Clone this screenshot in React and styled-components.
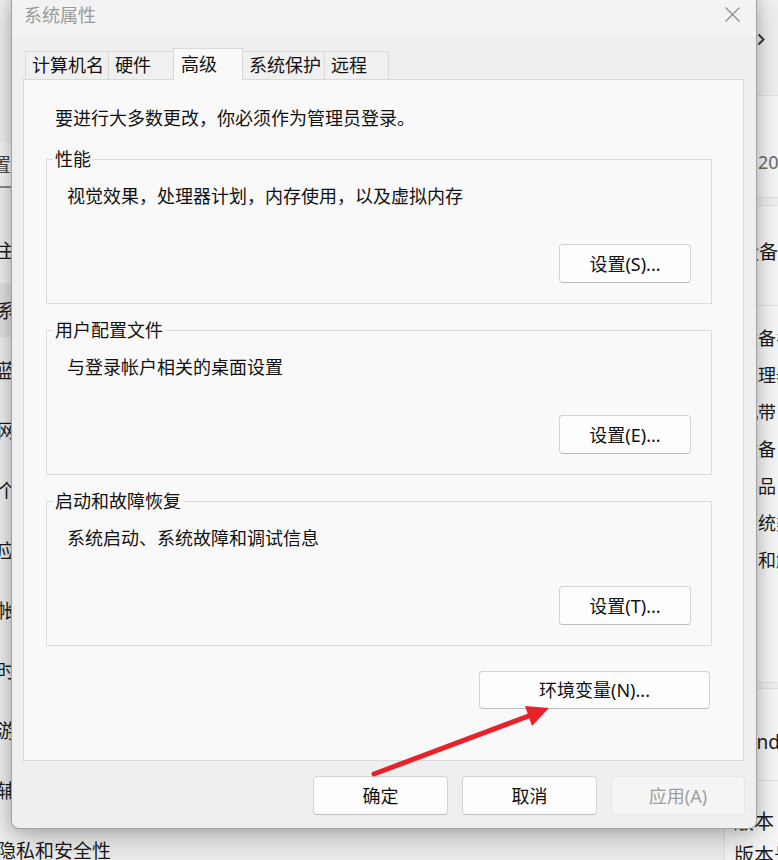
import React from 'react';
import styled, { createGlobalStyle } from 'styled-components';

const GlobalStyle = createGlobalStyle`
  html, body { margin: 0; padding: 0; overflow: hidden; background: #f0f0f0; }
  #root { position: relative; width: 778px; height: 860px; overflow: hidden; }
`;

const FONT = `"Noto Sans", "Noto Sans CJK SC", sans-serif`;

/* ---------- background settings page ---------- */
const Page = styled.div`
  display: grid;
  grid-template-columns: 126px 602px 320px;
  margin-left: -4px;
  width: 1048px;
  height: 860px;
  background: #f0f0f0;
  font-family: ${FONT};
  color: #1b1b1b;
`;

const Nav = styled.nav`
  display: flex;
  flex-direction: column;
  padding: 142px 0 0 1px;
  overflow: hidden;
`;

const Search = styled.div`
  height: 46px;
  box-sizing: border-box;
  flex: none;
  background: #f8f8f8;
  border-bottom: 2px solid #8a8a8a;
  display: flex;
  align-items: center;
  font-size: 19px;
  color: #4a4a4a;
  margin-bottom: 32px;
  white-space: nowrap;
  text-indent: -24px;
  overflow: hidden;
`;

const NavItem = styled.div`
  height: 54px;
  flex: none;
  margin: 3px 0;
  display: flex;
  align-items: center;
  font-size: 19px;
  white-space: nowrap;
  border-radius: 4px;
  background: ${p => (p.$active ? 'rgba(0,0,0,0.05)' : 'transparent')};
`;

const Side = styled.div`
  display: flex;
  flex-direction: column;
`;

const Header = styled.div`
  height: 95px;
  flex: none;
  box-sizing: border-box;
  padding: 33px 0 0 33px;
  display: flex;
  align-items: flex-start;
`;

const Card = styled.div`
  flex: none;
  box-sizing: border-box;
  height: ${p => p.$h}px;
  margin-top: ${p => p.$mt || 0}px;
  padding: ${p => p.$pt || 0}px 0 0 ${p => p.$pl}px;
  background: #f7f7f7;
  border: 1px solid #e2e2e2;
  border-radius: 6px;
  display: flex;
  flex-direction: column;
  white-space: nowrap;
`;

const CardMuted = styled.div`
  font-size: 18px;
  line-height: 24px;
  color: #6a6a6a;
`;

const CardHeading = styled.div`
  font-size: 19px;
  line-height: 24px;
`;

const CardRule = styled.div`
  height: 1px;
  background: #e2e2e2;
  margin: ${p => p.$mt}px 0 ${p => p.$mb}px -${p => p.$pl}px;
`;

const SpecRow = styled.div`
  font-size: ${p => p.$fs || 18}px;
  height: ${p => p.$h}px;
  line-height: ${p => p.$h}px;
`;

/* ---------- dialog ---------- */
const Dialog = styled.section`
  position: absolute;
  left: 11px;
  top: -8px;
  width: 746px;
  height: 837px;
  box-sizing: border-box;
  border: 1px solid rgba(0, 0, 0, 0.32);
  border-radius: 8px;
  background: #efefef;
  box-shadow: 0 0 14px rgba(0, 0, 0, 0.16), 0 12px 30px rgba(0, 0, 0, 0.22);
  display: flex;
  flex-direction: column;
  overflow: hidden;
  font-family: ${FONT};
  color: #111;
`;

const TitleBar = styled.header`
  height: 43px;
  flex: none;
  display: flex;
  align-items: center;
  padding: 0 16px 0 12px;
  background: #f3f3f3;
`;

const Title = styled.span`
  font-size: 18px;
  line-height: 24px;
  color: #9a9a9a;
`;

const Close = styled.span`
  margin-left: auto;
  display: flex;
`;

const Body = styled.div`
  flex: 1;
  display: flex;
  flex-direction: column;
  padding: 12px 12px 0 11px;
`;

const TabRow = styled.div`
  display: flex;
  align-items: flex-end;
  height: 32px;
  padding-left: 2px;
  margin-bottom: -1px;
  position: relative;
  z-index: 1;
`;

const Tab = styled.div`
  box-sizing: border-box;
  width: ${p => p.$w}px;
  height: ${p => (p.$active ? 32 : 29)}px;
  margin-right: -1px;
  border: 1px solid #d9d9d9;
  border-bottom: ${p => (p.$active ? 'none' : '1px solid #d9d9d9')};
  background: ${p => (p.$active ? '#f9f9f9' : '#f0f0f0')};
  padding-left: ${p => (p.$active ? 7 : 6)}px;
  font-size: 18px;
  line-height: ${p => (p.$active ? 30 : 27)}px;
  position: relative;
  z-index: ${p => (p.$active ? 2 : 1)};
  white-space: nowrap;
`;

const Panel = styled.div`
  height: 682px;
  flex: none;
  box-sizing: border-box;
  border: 1px solid #dadada;
  background: #f9f9f9;
  padding: 26px 31px 0 22px;
  display: flex;
  flex-direction: column;
`;

const Intro = styled.div`
  font-size: 18px;
  line-height: 24px;
  margin-left: 9px;
`;

const Group = styled.fieldset`
  margin: ${p => p.$mt}px 0 0;
  padding: 0;
  border: 1px solid #dcdcdc;
  min-width: 0;
`;

const Legend = styled.legend`
  font-size: 18px;
  line-height: 24px;
  padding: 0 2px;
  margin-left: 6px;
`;

const GroupBody = styled.div`
  display: flex;
  flex-direction: column;
  padding: 13px 20px 20px 20px;
`;

const Desc = styled.div`
  font-size: 18px;
  line-height: 24px;
`;

const Button = styled.button`
  box-sizing: border-box;
  width: ${p => p.$w}px;
  height: ${p => p.$h || 39}px;
  flex: none;
  padding: 0;
  border: 1px solid ${p => (p.disabled ? '#e6e6e6' : '#d3d3d3')};
  border-bottom-color: ${p => (p.disabled ? '#e6e6e6' : '#bcbcbc')};
  border-radius: 4px;
  background: ${p => (p.disabled ? '#f5f5f5' : '#fdfdfd')};
  color: ${p => (p.disabled ? '#9e9e9e' : '#111')};
  font-family: ${FONT};
  font-size: 18px;
  line-height: 24px;
`;

const SetButton = styled(Button)`
  align-self: flex-end;
  margin-top: 36px;
`;

const EnvButton = styled(Button)`
  align-self: flex-end;
  margin: 25px 2px 0 0;
`;

const Footer = styled.div`
  display: flex;
  justify-content: flex-end;
  gap: 14px;
  margin: 15px -1px 0 0;
`;

const Overlay = styled.svg`
  position: absolute;
  left: 0;
  top: 0;
  width: 778px;
  height: 860px;
  pointer-events: none;
`;

const groups = [
  { title: '性能', desc: '视觉效果，处理器计划，内存使用，以及虚拟内存', btn: '设置(S)...', mt: 17 },
  { title: '用户配置文件', desc: '与登录帐户相关的桌面设置', btn: '设置(E)...', mt: 14 },
  { title: '启动和故障恢复', desc: '系统启动、系统故障和调试信息', btn: '设置(T)...', mt: 14 },
];

const tabs = [
  { label: '计算机名', w: 84 },
  { label: '硬件', w: 66 },
  { label: '高级', w: 70, active: true },
  { label: '系统保护', w: 83 },
  { label: '远程', w: 65 },
];

const navItems = ['主页', '系统', '蓝牙和其他设备', '网络和 Internet', '个性化', '应用', '帐户', '时间和语言', '游戏', '辅助功能', '隐私和安全性'];

const specs = ['设备名称', '处理器', '机带 RAM', '设备 ID', '产品 ID', '系统类型', '笔和触控'];

export default function App() {
  return (
    <>
      <GlobalStyle />
      <Page>
        <Nav>
          <Search>设置</Search>
          {navItems.map(n => (
            <NavItem key={n} $active={n === '系统'}>{n}</NavItem>
          ))}
        </Nav>
        <div />
        <Side>
          <Header>
            <svg width="8" height="13" viewBox="0 0 8 13">
              <path d="M1.5 1.5 L6.5 6.5 L1.5 11.5" fill="none" stroke="#3a3a3a" strokeWidth="2" />
            </svg>
          </Header>
          <Card $h={103} $pt={54} $pl={33}>
            <CardMuted>2024</CardMuted>
          </Card>
          <Card $h={478} $mt={7} $pt={34} $pl={15}>
            <CardHeading>设备规格</CardHeading>
            <CardRule $mt={41} $mb={14} $pl={15} />
            {specs.map(s => (
              <SpecRow key={s} $h={37}>{s}</SpecRow>
            ))}
          </Card>
          <Card $h={300} $mt={5} $pt={41} $pl={9}>
            <CardHeading>Windows 规格</CardHeading>
            <CardRule $mt={26} $mb={24} $pl={9} />
            <SpecRow $h={34} $fs={20}>版本</SpecRow>
            <SpecRow $h={34} $fs={20}>版本号</SpecRow>
          </Card>
        </Side>
      </Page>

      <Dialog>
        <TitleBar>
          <Title>系统属性</Title>
          <Close>
            <svg width="15" height="15" viewBox="0 0 15 15">
              <path d="M0.5 0.5 L14.5 14.5 M14.5 0.5 L0.5 14.5" stroke="#8a8a8a" strokeWidth="1.2" fill="none" />
            </svg>
          </Close>
        </TitleBar>
        <Body>
          <TabRow>
            {tabs.map(t => (
              <Tab key={t.label} $w={t.w} $active={t.active}>{t.label}</Tab>
            ))}
          </TabRow>
          <Panel>
            <Intro>要进行大多数更改，你必须作为管理员登录。</Intro>
            {groups.map(g => (
              <Group key={g.title} $mt={g.mt}>
                <Legend>{g.title}</Legend>
                <GroupBody>
                  <Desc>{g.desc}</Desc>
                  <SetButton $w={132}>{g.btn}</SetButton>
                </GroupBody>
              </Group>
            ))}
            <EnvButton $w={231} $h={38}>环境变量(N)...</EnvButton>
          </Panel>
          <Footer>
            <Button $w={135}>确定</Button>
            <Button $w={135}>取消</Button>
            <Button $w={134} disabled>应用(A)</Button>
          </Footer>
        </Body>
      </Dialog>

      <Overlay viewBox="0 0 778 860">
        <line x1="374" y1="774" x2="534" y2="714" stroke="#e8212b" strokeWidth="5" strokeLinecap="round" />
        <polygon points="549,708 525,706 532,726" fill="#e8212b" />
      </Overlay>
    </>
  );
}
